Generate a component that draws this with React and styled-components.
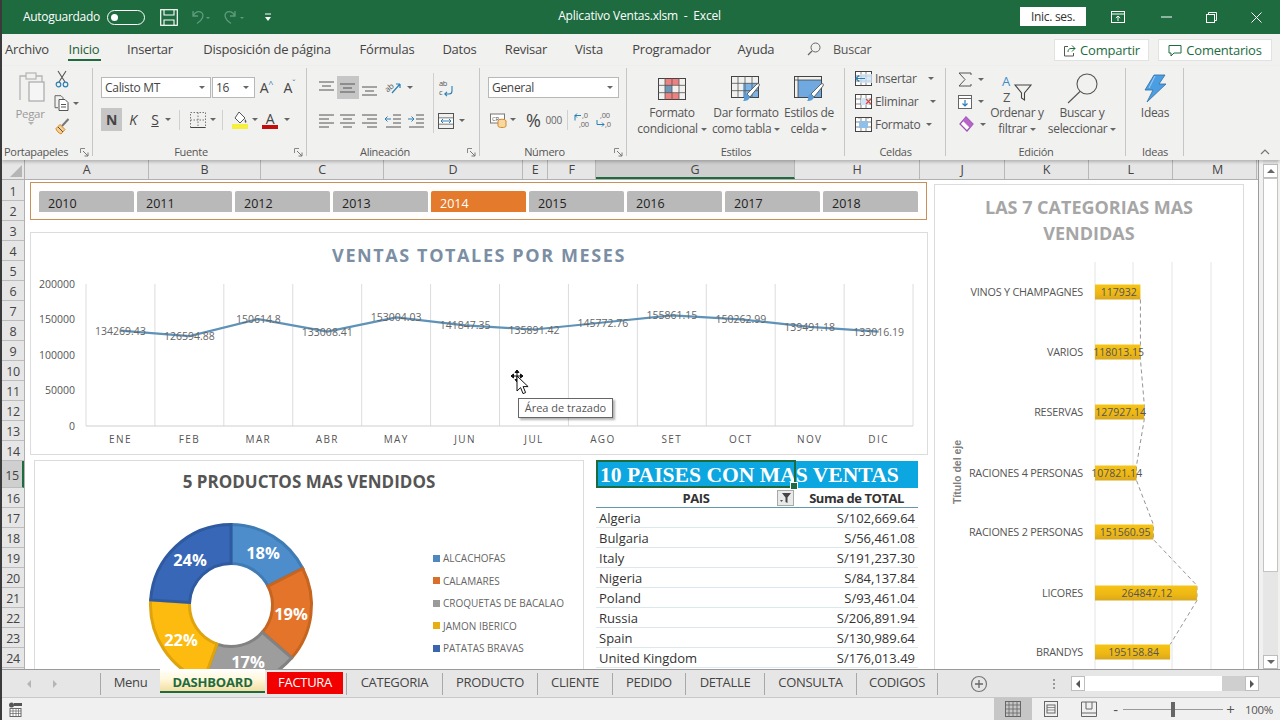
import React from "react";
import styled, { createGlobalStyle, css } from "styled-components";

const Global = createGlobalStyle`
  html, body { margin: 0; padding: 0; background: #fff; overflow: hidden; }
  * { box-sizing: border-box; }
  body { font-family: "Open Sans", "Noto Sans", sans-serif; }
`;

const UI = `"Open Sans", "Noto Sans", sans-serif`;

/* ---------- frame ---------- */
const Window = styled.div`
  width: 1280px; height: 720px; display: flex; flex-direction: column; overflow: hidden;
  border-left: 2px solid #3a3a3a; font-family: ${UI}; color: #444; background: #f1f1ef; letter-spacing: -0.3px;
`;

/* ---------- title bar ---------- */
const TitleBar = styled.header`
  height: 34px; flex: none; background: #1d6b3f; color: #fff; display: flex; align-items: center; font-size: 12px;
`;
const TitleSide = styled.div`
  flex: 1 1 0; display: flex; align-items: center; justify-content: ${p => (p.$end ? "flex-end" : "flex-start")};
  padding-left: 21px;
`;
const DocTitle = styled.div`font-size: 12px; white-space: pre; letter-spacing: -0.2px; padding-bottom: 3px; margin-right: 3px;`;
const AutoLabel = styled.span`white-space: nowrap; padding-bottom: 2px;`;
const Toggle = styled.span`
  width: 38px; height: 15px; border: 1.3px solid #fff; border-radius: 8px; margin-left: 7px; display: flex; align-items: center; padding-left: 3px;
  &::before { content: ""; width: 7px; height: 7px; border-radius: 50%; background: #fff; }
`;
const QuickIcon = styled.span`display: flex; margin-left: ${p => p.$ml}px;`;
const SignIn = styled.button`
  width: 66px; height: 19px; border: 0; background: #fff; color: #333; font: 12px ${UI}; letter-spacing: -0.3px; padding: 0; margin-right: 8px; margin-bottom: 2px;
`;
const WinButton = styled.span`width: ${p => p.$w}px; display: flex; justify-content: center;`;

/* ---------- tab row ---------- */
const TabRow = styled.nav`height: 32px; flex: none; display: flex; align-items: center; font-size: 13px; padding-bottom: 2px; letter-spacing: -0.22px;`;
const Tab = styled.span`
  width: ${p => p.$w}px; flex: none; text-align: center; white-space: nowrap; color: ${p => (p.$active ? "#1d5f39" : "#444")};
`;
const TabText = styled.span`
  position: relative; display: inline-block;
  ${p => p.$active && css`
    &::after { content: ""; position: absolute; left: -1px; right: -2px; bottom: -3px; height: 2.5px; background: #1d6b3f; }
  `}
`;
const SearchBox = styled.span`display: flex; align-items: center; gap: 12px; margin-left: 17px; color: #555; font-size: 12.5px;`;
const TabSpacer = styled.span`flex: 1;`;
const ShareButton = styled.span`
  width: ${p => p.$w}px; height: 22px; margin-right: ${p => p.$mr}px; background: #fff; border: 1px solid #e2e2e2; display: flex; align-items: center; justify-content: center; gap: 4px; color: #1d6b3f; font-size: 13px; white-space: nowrap; font-weight: 500; margin-top: 2px;
`;

/* ---------- ribbon ---------- */
const Ribbon = styled.section`
  height: 94px; flex: none; display: flex; position: relative; z-index: 2; box-shadow: 0 2px 3px rgba(0,0,0,.22); background: #f1f1ef;
`;
const Group = styled.div`
  width: ${p => p.$w}px; flex: none; height: 94px; position: relative; display: flex; flex-direction: column;
  &::after { content: ""; position: absolute; right: 0; top: 2px; height: 88px; width: 1px; background: #c6c6c6; }
`;
const GroupBody = styled.div`
  height: 78px; display: flex; flex-direction: ${p => p.$col ? "column" : "row"}; padding: ${p => p.$pad || "0"};
`;
const GroupLabel = styled.div`
  height: 16px; line-height: 16px; font-size: 11px; color: #555; text-align: ${p => p.$left ? "left" : "center"}; padding-left: ${p => p.$left ? 2 : 0}px; white-space: nowrap; position: relative; padding-right: ${p => p.$pr || 0}px;
`;
const Launcher = styled.span`position: absolute; right: ${p => p.$r ?? 4}px; top: 4px; display: flex;`;
const Collapse = styled.span`position: absolute; right: 10px; bottom: 5px; display: flex;`;
const Row = styled.div`display: flex; align-items: center; height: ${p => p.$h}px; margin-top: ${p => p.$mt || 0}px;`;
const Tool = styled.span`
  width: ${p => p.$w}px; height: 100%; flex: none; display: flex; align-items: center; justify-content: center; background: ${p => p.$on ? "#c6c6c6" : "transparent"};
`;
const ToolSep = styled.span`width: 1px; height: ${p => p.$h || 20}px; background: #d0d0d0; margin: 0 ${p => p.$m ?? 4}px; flex: none;`;
const Caret = styled.span`
  width: 0; height: 0; border-left: 3px solid transparent; border-right: 3px solid transparent; border-top: 3px solid ${p => p.$light ? "#b5b5b5" : "#666"}; display: inline-block; flex: none; margin-left: ${p => p.$ml || 0}px; vertical-align: middle;
`;
const PasteCol = styled.div`width: 40px; margin-left: 9px; padding-top: 5px; display: flex; flex-direction: column; align-items: center; color: #9a9a9a; font-size: 11.5px; flex: none;`;
const PasteText = styled.span`margin-top: 2px; line-height: 17px; margin-right: 2px;`;
const ClipCol = styled.div`width: 30px; margin-left: 0; display: flex; flex-direction: column; padding-top: 3px; flex: none;`;
const Combo = styled.span`
  width: ${p => p.$w}px; height: 21px; background: #fff; border: 1px solid #b8b8b8; margin-left: ${p => p.$ml || 0}px; display: flex; align-items: center; justify-content: space-between; padding: 0 5px 0 3px; font-size: 12px; color: #444; flex: none; white-space: nowrap;
`;
const StyleGlyph = styled.span`
  font-family: ${UI}; font-size: 14px; color: #444;
  font-weight: ${p => p.$b ? 700 : 400}; font-style: ${p => p.$i ? "italic" : "normal"}; text-decoration: ${p => p.$u ? "underline" : "none"};
`;
const GrowGlyph = styled.span`font-size: 14px; color: #444; flex: none; display: flex; width: ${p => p.$w}px; justify-content: center; align-items: flex-start;`;
const Tiny = styled.span`font-size: 9px; line-height: 9px; color: #1f7eb5; margin-top: 1px;`;
const VDivider = styled.span`width: 1px; height: 60px; background: #d0d0d0; margin-top: 7px; flex: none;`;
const AlignCol = styled.div`display: flex; flex-direction: column; padding-top: 10px; flex: none; width: ${p => p.$w}px;`;
const Percent = styled.span`font-size: 18px; color: #444; flex: none;`;
const Thousand = styled.span`font-size: 10px; color: #666; flex: none;`;
const BigButton = styled.div`
  width: ${p => p.$w}px; flex: none; display: flex; flex-direction: column; align-items: center; padding-top: 6px; font-size: 12px; line-height: 16px; color: #555; white-space: nowrap;
`;
const BigIcon = styled.span`height: 33px; display: flex; align-items: center; justify-content: center;`;
const CellRow = styled.div`display: flex; align-items: center; gap: 3px; height: 23px; font-size: 12px; color: #555; padding-left: 10px; white-space: nowrap;`;
const EditCol = styled.div`width: 44px; flex: none; display: flex; flex-direction: column; padding: 2px 0 0 12px;`;
const EditRow = styled.div`height: 22.5px; display: flex; align-items: center; gap: 6px;`;

/* ---------- grid ---------- */
const Main = styled.main`flex: none; height: 509px; display: flex; background: #f1f1ef;`;
const Sheet = styled.div`width: 1257px; flex: none; display: flex; flex-direction: column; border-right: 1px solid #9c9c9c; background: #fff;`;
const ColumnBar = styled.div`height: 20px; flex: none; display: flex; background: #e6e6e6; border-bottom: 1px solid #b0b0b0;`;
const Corner = styled.div`width: 23px; flex: none; border-right: 1px solid #b0b0b0; display: flex; align-items: flex-end; justify-content: flex-end; padding: 0 2px 2px 0;`;
const ColCell = styled.div`
  width: ${p => p.$w}px; flex: none; text-align: center; font-size: 12.5px; line-height: 19px; color: #444; border-right: 1px solid #b8b8b8; padding-left: ${p => p.$pl || 0}px;
  background: ${p => p.$on ? "#cfcfcf" : "transparent"};
  border-bottom: ${p => p.$on ? "2px solid #1d6b3f" : "0"};
`;
const Body = styled.div`flex: 1; display: flex; min-height: 0;`;
const RowBar = styled.div`width: 23px; flex: none; background: #e6e6e6; border-right: 1px solid #b0b0b0; padding-top: 1px; overflow: hidden;`;
const RowCell = styled.div`
  height: ${p => p.$h}px; text-align: center; font-size: 12.5px; line-height: ${p => p.$h}px; color: #444; border-bottom: 1px solid #bdbdbd; padding-top: 1px;
  background: ${p => p.$on ? "#cfcfcf" : "transparent"};
  border-right: ${p => p.$on ? "2px solid #1d6b3f" : "0"};
`;
const Canvas = styled.div`
  flex: 1; overflow: hidden; background: #fff; display: flex; padding: 2px 0 0 5px; align-items: flex-start; letter-spacing: 0;
`;
const LeftPane = styled.div`width: 898px; flex: none; display: flex; flex-direction: column;`;
const Slicer = styled.div`
  height: 38px; width: 897px; border: 1px solid #c89058; display: flex; gap: 3px; padding: 8px 0 0 8px; background: #fffefc;
`;
const SlicerItem = styled.div`
  width: 95px; height: 21px; flex: none; border-radius: 2px 2px 0 0; font-size: 12.5px; padding: 4px 0 0 9px; line-height: 18px;
  background: ${p => p.$on ? "#e47a2b" : "#b9b9b9"}; color: ${p => p.$on ? "#fff" : "#222"};
`;
const ChartCard = styled.div`
  border: 1px solid #dcdcdc; background: #fff; position: relative; flex: none;
  width: ${p => p.$w}px; height: ${p => p.$h}px; margin: ${p => p.$m || 0};
`;
const ChartTitle = styled.div`
  text-align: center; font-weight: 700; font-size: ${p => p.$s}px; line-height: ${p => p.$lh}px; color: ${p => p.$c}; letter-spacing: ${p => p.$ls || 0}px; padding-top: ${p => p.$pt}px; white-space: nowrap;
`;
const PlotSvg = styled.svg`display: block;`;
const PlotGap = styled.div`height: 4px;`;
const Cursor = styled.svg`position: absolute; left: 477px; top: 136px;`;
const Tip = styled.div`
  position: absolute; left: 487px; top: 165px; width: 95px; height: 20px; border: 1px solid #666; background: #fff; font-size: 11px; line-height: 18px; color: #555; text-align: center; box-shadow: 2px 2px 2px rgba(0,0,0,.3); white-space: nowrap;
`;
const BottomRow = styled.div`display: flex; margin-top: 5px; align-items: flex-start;`;
const DonutBody = styled.div`display: flex;`;
const Legend = styled.div`display: flex; flex-direction: column; margin: 53px 0 0 0;`;
const LegendItem = styled.div`height: 22.5px; display: flex; align-items: center; gap: 3px; font-size: 10px; color: #666; white-space: nowrap;`;
const Swatch = styled.span`width: 7px; height: 7px; background: ${p => p.$c}; flex: none;`;

const PivotBlock = styled.div`width: 322px; margin-left: 12px; position: relative; flex: none; padding-top: 1px;`;
const PivotTitle = styled.div`
  height: 27px; background: #0ca6e0; color: #fff; font-family: "Liberation Serif", serif; font-weight: 700; font-size: 21.6px; line-height: 28px; padding-left: 4px; white-space: nowrap;
`;
const Selection = styled.div`
  position: absolute; left: 0; top: 0; width: 200px; height: 28px; border: 2px solid #1d6b3f;
  &::after { content: ""; position: absolute; right: -4px; bottom: -4px; width: 6px; height: 6px; background: #1d6b3f; border: 1px solid #fff; }
`;
const PivotRow = styled.div`
  height: 20px; display: grid; grid-template-columns: 200px 1fr; font-size: 13px; line-height: 20px; color: #333; border-bottom: 1px solid #dbe9ee;
`;
const PivotHead = styled(PivotRow)`font-weight: 700; border-bottom: 1px solid #5f9aa6; color: #333; letter-spacing: -0.45px;`;
const HeadCell = styled.div`text-align: ${p => p.$a || "center"}; padding-right: ${p => p.$pr || 0}px; position: relative; white-space: nowrap;`;
const FilterBtn = styled.span`
  position: absolute; right: 2px; top: 2px; width: 17px; height: 16px; border: 1px solid #a9a9a9; background: #e9e9e9; display: flex; align-items: center; justify-content: center;
`;
const NameCell = styled.div`padding-left: 3px; white-space: nowrap;`;
const AmountCell = styled.div`text-align: right; padding-right: 3px; white-space: nowrap;`;

/* ---------- v-scroll ---------- */
const VScroll = styled.aside`width: 15px; margin-left: 4px; flex: none; display: flex; flex-direction: column; background: #e6e6e6; padding-top: 4px;`;
const ScrollBtn = styled.span`height: 14px; flex: none; background: #fff; border: 1px solid #bdbdbd; display: flex; align-items: center; justify-content: center;`;
const ScrollThumb = styled.span`height: 394px; flex: none; background: #fff; border: 1px solid #c4c4c4;`;
const ScrollTrack = styled.span`flex: 1;`;
const Tri = styled.span`
  width: 0; height: 0; border-left: 4px solid transparent; border-right: 4px solid transparent;
  ${p => p.$up ? "border-bottom: 4px solid #666;" : "border-top: 4px solid #666;"}
`;

/* ---------- sheet tabs ---------- */
const SheetTabs = styled.div`height: 28px; flex: none; display: flex; align-items: stretch; background: #e6e6e6; border-top: 1px solid #9a9a9a; position: relative; z-index: 1; font-size: 13px;`;
const TabNav = styled.div`width: 98px; flex: none; display: flex; align-items: center; color: #aaa; padding-left: 25px; gap: 22px;`;
const NavArrow = styled.span`
  width: 0; height: 0; border-top: 4px solid transparent; border-bottom: 4px solid transparent;
  ${p => p.$l ? `border-right: 4px solid ${p.$dark ? "#555" : "#b5b5b5"};` : `border-left: 4px solid ${p.$dark ? "#555" : "#b5b5b5"};`}
`;
const SheetTab = styled.div`
  width: ${p => p.$w}px; flex: none; height: 22px; margin-top: 3px; text-align: center; line-height: 19px; color: #444; white-space: nowrap; border-left: 1px solid #a8a8a8;
`;
const ActiveTab = styled.div`
  width: 105px; flex: none; height: 24px; margin-top: -1px; text-align: center; line-height: 26px; font-weight: 700; color: #1d6b3f; background: linear-gradient(#fff 0%, #fff8dc 45%, #f3dfa2 100%); border-bottom: 2.5px solid #1d6b3f; white-space: nowrap; letter-spacing: -0.2px;
`;
const RedTabWrap = styled.div`width: 81px; flex: none; padding: 2px 3px 0 2px;`;
const RedTab = styled.div`height: 22px; background: #f20000; color: #fff; text-align: center; line-height: 21px; white-space: nowrap;`;
const AddSheet = styled.span`margin-left: 32px; margin-top: 5px; width: 18px; height: 18px; display: flex; flex: none;`;
const Dots = styled.span`margin-left: 65px; margin-top: 8px; width: 2px; height: 12px; flex: none; background-image: radial-gradient(circle, #999 0.9px, transparent 1.1px); background-size: 2px 4px;`;
const HScroll = styled.div`margin-left: 16px; width: 188px; height: 15px; margin-top: 6px; flex: none; display: flex; background: #cfcfcf;`;
const HBtn = styled.span`width: 14px; flex: none; background: #fff; border: 1px solid #bdbdbd; display: flex; align-items: center; justify-content: center;`;
const HThumb = styled.span`width: 137px; flex: none; background: #fff;`;
const HGap = styled.span`flex: 1;`;

/* ---------- status bar ---------- */
const StatusBar = styled.footer`height: 23px; flex: none; display: flex; align-items: stretch; background: #f0f0f0; border-top: 1px solid #c8c8c8; padding-left: 6px; font-size: 12px; color: #555;`;
const StatusIcon = styled.span`display: flex; align-items: center;`;
const StatusRight = styled.div`margin-left: auto; display: flex; align-items: stretch;`;
const ViewBtn = styled.span`width: 38px; display: flex; align-items: center; justify-content: center; background: ${p => p.$on ? "#c6c6c6" : "transparent"};`;
const Zoomer = styled.div`width: 172px; display: flex; align-items: center; color: #555; font-size: 15px;`;
const ZoomGlyph = styled.span`width: 15px; flex: none; text-align: center;`;
const ZoomTrack = styled.span`width: 100px; height: 1px; background: #999; position: relative; flex: none;
  &::after { content: ""; position: absolute; left: 48px; top: -7px; width: 4px; height: 15px; background: #666; }
`;
const ZoomPct = styled.span`font-size: 11.5px; width: 35px; margin-left: 7px; white-space: nowrap;`;

/* ---------- icons ---------- */
const I = ({ w, h, children, ...r }) => <svg width={w} height={h} viewBox={`0 0 ${w} ${h}`} fill="none" overflow="visible" {...r}>{children}</svg>;

const SaveIcon = () => <I w={18} h={17}><rect x=".7" y=".7" width="16.6" height="15.6" stroke="#fff" strokeWidth="1.2"/><path d="M4 1v5h10V1M4 16v-5h10v5" stroke="#fff" strokeWidth="1.1"/></I>;
const UndoIcon = ({ flip }) => <I w={22} h={17}><g transform={flip ? "translate(14 0) scale(-1 1)" : ""}><path d="M3 2v5h5M3.2 6.8C5 3 9 1.5 11.5 3.5c3 2.4 1 8-4.5 11" stroke="#5e9c7b" strokeWidth="1.3"/></g><path d="M16 8l2 2 2-2" fill="#5e9c7b"/></I>;
const QuickCaret = () => <I w={8} h={9}><path d="M1 1h6" stroke="#fff"/><path d="M1 4l3 4 3-4z" fill="#fff"/></I>;
const RibbonDisplay = () => <I w={14} h={12}><rect x=".5" y=".5" width="13" height="11" stroke="#fff"/><path d="M.5 3h13M7 10V5M4.8 7L7 5l2.2 2" stroke="#fff"/></I>;
const MinIcon = () => <I w={11} h={2}><path d="M0 1h11" stroke="#fff"/></I>;
const RestoreIcon = () => <I w={11} h={11}><rect x=".5" y="2.5" width="8" height="8" stroke="#fff"/><path d="M2.5 2.5v-2h8v8h-2" stroke="#fff"/></I>;
const CloseIcon = () => <I w={11} h={11}><path d="M.5.5l10 10M10.5.5l-10 10" stroke="#fff"/></I>;
const SearchIcon = ({ s = 14 }) => <svg width={s} height={s} viewBox="0 0 14 14" fill="none"><circle cx="8.5" cy="5.5" r="4.5" stroke="#666"/><path d="M5 9l-4 4" stroke="#666" strokeWidth="1.2"/></svg>;
const ShareIcon = () => <I w={13} h={13}><path d="M9 1.5l3 3-3 3M12 4.5H8c-2 0-3 1.3-3 3.5" stroke="#1d6b3f"/><path d="M5 2.5H1.5v9.5h9V9" stroke="#555"/></I>;
const CommentIcon = () => <I w={14} h={13}><path d="M1 1.5h12v7.5H6l-3 3V9H1z" stroke="#1d6b3f"/></I>;

const ClipboardIcon = () => <I w={28} h={32}><path d="M3 29V5h6M19 5h6v6" stroke="#b4b4b4" strokeWidth="1.3"/><rect x="9" y="2" width="10" height="6" stroke="#b4b4b4" strokeWidth="1.2"/><rect x="12" y="11" width="15" height="19" fill="#f5f5f5" stroke="#a8a8a8" strokeWidth="1.2"/></I>;
const ScissorsIcon = () => <I w={14} h={18}><path d="M3 1l7 11M11 1L4 12" stroke="#555" strokeWidth="1.1"/><circle cx="3.5" cy="14.5" r="2.3" stroke="#2a7fb5" strokeWidth="1.2"/><circle cx="10.5" cy="14.5" r="2.3" stroke="#2a7fb5" strokeWidth="1.2"/></I>;
const CopyIcon = () => <I w={17} h={16}><path d="M1 .7h6l2 2v3M1 .7v12h3" stroke="#666"/><path d="M5 4.5h6l3 3v8H5z" fill="#fff" stroke="#555"/><path d="M7 9.5h5M7 12h5" stroke="#555"/></I>;
const BrushIcon = () => <I w={15} h={17}><path d="M13.5 1L7 8" stroke="#777" strokeWidth="2"/><path d="M5 6.5l5 5-4 4.5c-2-1-5-3-5-5.5z" fill="#f6cd90" stroke="#d48a2a"/><path d="M3 9l5 5" stroke="#555"/></I>;

const BorderIcon = () => <I w={16} h={16}><rect x=".5" y=".5" width="15" height="15" stroke="#777" strokeDasharray="1.5 1.5"/><path d="M8 .5v15M.5 8h15" stroke="#777" strokeDasharray="1.5 1.5"/><path d="M.5 15.5h15" stroke="#444"/></I>;
const FillIcon = () => <I w={16} h={18}><path d="M7 1l6 6-5 5-5-5z" stroke="#555" fill="#fff"/><path d="M13 8c1 1.6 2 2.8 1.2 3.6-1 .6-2-.5-1.2-3.6z" fill="#555"/><rect x="0" y="13" width="16" height="5" fill="#f6f03c"/></I>;
const FontColorIcon = () => <I w={16} h={18}><text x="8" y="12.5" textAnchor="middle" fontFamily="Open Sans" fontSize="14" fill="#444">A</text><rect x="0" y="14" width="16" height="4" fill="#c40d0d"/></I>;

const Lines = ({ rows }) => <I w={16} h={16}>{rows.map(([a, b, y], i) => <path key={i} d={`M${a} ${y}H${b}`} stroke="#555"/>)}</I>;
const full = (ys, s = [[0, 15], [3, 12], [0, 15]]) => ys.map((y, i) => [s[i % s.length][0], s[i % s.length][1], y]);
const OrientIcon = () => <I w={18} h={14}><text x="1" y="9" fontSize="8" fontFamily="Open Sans" fill="#555" transform="rotate(-40 6 7)">ab</text><path d="M8 12l8-9M16 3h-4M16 3v4" stroke="#2a7fb5" strokeWidth="1.2"/></I>;
const WrapIcon = () => <I w={16} h={18}><text x="1" y="6.5" fontSize="7.5" fontFamily="Open Sans" fill="#555">ab</text><text x="1" y="15.5" fontSize="7.5" fontFamily="Open Sans" fill="#555">c</text><path d="M14 7v5c0 2-1 3-3 3H7M9 12.8L6.8 15 9 17.2" stroke="#2a7fb5" strokeWidth="1.1"/></I>;
const IndentIcon = ({ out }) => <I w={16} h={14}><path d="M8 1h8M8 5h8M8 9h8M1 13h15" stroke="#555"/>{out
  ? <path d="M6 5H0M2.5 2.5L0 5l2.5 2.5" stroke="#2a7fb5"/>
  : <path d="M0 5h6M3.5 2.5L6 5 3.5 7.5" stroke="#2a7fb5"/>}</I>;
const MergeIcon = () => <I w={16} h={16}><rect x=".5" y=".5" width="15" height="15" stroke="#555"/><path d="M.5 5h15M.5 11h15" stroke="#555"/><rect x="1" y="5.5" width="14" height="5" fill="#fff"/><path d="M3 8h10M5 6L3 8l2 2M11 6l2 2-2 2" stroke="#2a7fb5"/></I>;
const CurrencyIcon = () => <I w={17} h={16}><rect x=".5" y="2" width="14" height="9" fill="#fff" stroke="#777"/><text x="2" y="8.5" fontSize="6" fontFamily="Open Sans" fill="#555">CR</text><ellipse cx="12" cy="9" rx="4" ry="1.8" fill="#f6d8a0" stroke="#d48a2a"/><path d="M8 9v5c0 2 8 2 8 0V9" fill="#f6d8a0" stroke="#d48a2a"/></I>;
const DecimalMore = () => <I w={17} h={18}><text x="8" y="7" fontSize="7.5" fontFamily="Open Sans" fill="#666">,0</text><text x="5" y="16" fontSize="7.5" fontFamily="Open Sans" fill="#666">,00</text><path d="M7 4.5H1M3 2.5l-2 2 2 2M1 4.5v5" stroke="#2a7fb5"/></I>;
const DecimalLess = () => <I w={17} h={18}><text x="5" y="7" fontSize="7.5" fontFamily="Open Sans" fill="#666">,00</text><text x="10" y="16" fontSize="7.5" fontFamily="Open Sans" fill="#666">,0</text><path d="M2 9v4.5h7M7 11.5l2 2-2 2" stroke="#2a7fb5"/></I>;

const Grid = ({ w = 28, h = 22 }) => <>
  <rect x=".5" y=".5" width={w - 1} height={h - 1} stroke="#444"/>
  <path d={`M.5 ${h / 3}H${w}M.5 ${2 * h / 3}H${w}M${w / 4} 0V${h}M${w / 2} 0V${h}M${3 * w / 4} 0V${h}`} stroke="#555" strokeWidth=".8"/>
</>;
const CondIcon = () => <I w={28} h={22}>
  <rect x="7" y="0" width="14" height="7" fill="#ef8080"/><rect x="7" y="7" width="7" height="8" fill="#6f97b7"/><rect x="7" y="15" width="14" height="7" fill="#ef8080"/>
  <Grid/>
</I>;
const Brush = ({ x = 0, y = 0 }) => <g transform={`translate(${x} ${y})`}>
  <path d="M17 1c2-1 3 0 2 2L10 14l-3-3z" fill="#fff" stroke="#444" strokeWidth=".8"/>
  <path d="M7 11l3 3c-1 3-3 4-7 4 1.5-1 1-3 1-4.5 0-1.3 2-2.5 3-2.5z" fill="#5a9bd8"/>
</g>;
const TableIcon = () => <I w={30} h={26}><rect x="12" y="7" width="15" height="14" fill="#7db3e4"/><Grid w={28} h={22}/><Brush x={9} y={7}/></I>;
const CellStyleIcon = () => <I w={30} h={26}><rect x="4" y="4" width="24" height="18" fill="#6fa9df"/><rect x=".5" y=".5" width="27" height="21" stroke="#444"/><path d="M4 0v22M0 4h28" stroke="#444" strokeWidth=".8"/><Brush x={10} y={7}/></I>;
const MiniGrid = ({ children }) => <I w={17} h={15}><rect x=".5" y=".5" width="16" height="14" fill="#fff" stroke="#444"/><path d="M.5 5h16M.5 10h16M6 .5v14M11 .5v14" stroke="#555" strokeWidth=".7"/>{children}</I>;
const InsertCell = () => <MiniGrid><rect x="5" y="3" width="12" height="9" fill="#cfe4f5" opacity=".8"/><path d="M10 7.5H1M4 4.5L1 7.5l3 3" stroke="#2a7fb5" strokeWidth="1.2"/></MiniGrid>;
const DeleteCell = () => <MiniGrid><rect x="6" y="4" width="8" height="7" fill="#cfe4f5"/><path d="M11 5l5 5M16 5l-5 5" stroke="#d9463d" strokeWidth="1.2"/></MiniGrid>;
const FormatCell = () => <MiniGrid><rect x="4" y="4" width="9" height="7" fill="#8fc0ea"/><path d="M4 1.5v-1M13 1.5v-1" stroke="#444"/></MiniGrid>;
const SigmaIcon = () => <I w={14} h={15}><path d="M13 3V1H1l6 6.5L1 14h12v-2" stroke="#555"/></I>;
const FillDown = () => <I w={14} h={14}><rect x=".5" y=".5" width="13" height="13" fill="#fff" stroke="#666"/><path d="M.5 3.5h13" stroke="#666"/><path d="M7 5v6M4.5 8.5L7 11l2.5-2.5" stroke="#2a7fb5" strokeWidth="1.2"/></I>;
const EraserIcon = () => <I w={16} h={16}><path d="M8 1l7 7-6 7-7-7z" fill="#fff" stroke="#9b4fb5" strokeWidth="1.2"/><path d="M8 1l7 7-3.5 3.5-7-7z" fill="#b765c9"/></I>;
const SortIcon = () => <I w={31} h={28}><text x="0" y="11" fontSize="13" fontFamily="Open Sans" fill="#3f8ec9">A</text><text x="1" y="27" fontSize="13" fontFamily="Open Sans" fill="#555">Z</text><path d="M13 10h16l-6.5 8v7l-3-2v-5z" stroke="#444" strokeWidth="1.1"/></I>;
const FindIcon = () => <I w={31} h={31}><circle cx="20" cy="11" r="10" stroke="#555" strokeWidth="1.1"/><path d="M13 18.5L1 30" stroke="#555" strokeWidth="1.1"/></I>;
const BoltIcon = () => <I w={23} h={29}><path d="M10 1h11l-6 9h7L3 28l6-12H1z" fill="#4c9ee3" stroke="#2f6da3" strokeWidth=".8"/><path d="M11 2l-6 12" stroke="#9fd0f5"/></I>;
const LaunchIcon = () => <I w={9} h={9}><path d="M.5 5V.5H5" stroke="#888"/><path d="M3 3l5 5M8 4.5V8H4.5" stroke="#777"/></I>;
const ChevronUp = () => <I w={10} h={6}><path d="M1 5l4-4 4 4" stroke="#777" strokeWidth="1.2"/></I>;
const CornerIcon = () => <I w={12} h={12}><path d="M12 0v12H0z" fill="#b5b5b5"/></I>;
const FilterIcon = () => <I w={13} h={12}><path d="M3 1h9L8.5 5.5V11l-2-1V5.5z" fill="#444"/><path d="M1 8l1.5 2L4 8z" fill="#555"/></I>;
const PlusCircle = () => <I w={18} h={18}><circle cx="9" cy="9" r="7.5" stroke="#777" strokeWidth="1.2"/><path d="M9 5v8M5 9h8" stroke="#666" strokeWidth="1.3"/></I>;
const MacroIcon = () => <I w={15} h={15}><circle cx="3.5" cy="3" r="2.5" fill="#555"/><rect x="6" y="1" width="8" height="3" fill="#555"/><rect x="2" y="6.5" width="11" height="8" stroke="#666" fill="#fff"/><path d="M2 9h11M2 11.5h11M5 6.5v8M8 6.5v8M10.5 6.5v8" stroke="#666" strokeWidth=".7"/></I>;
const NormalView = () => <I w={16} h={16}><rect x=".5" y=".5" width="15" height="15" stroke="#666"/><path d="M.5 4h15M.5 8h15M.5 12h15M4 .5v15M8 .5v15M12 .5v15" stroke="#666" strokeWidth=".8"/></I>;
const PageView = () => <I w={16} h={16}><rect x="1.5" y=".5" width="13" height="15" stroke="#666"/><rect x="4" y="4" width="8" height="8" stroke="#666"/><path d="M4 6.5h8M4 9h8" stroke="#666" strokeWidth=".7"/></I>;
const BreakView = () => <I w={16} h={16}><path d="M.5 12h15M.5 12V1h15v11M.5 12v3.5h15V12M5 1v7h6V1" stroke="#666"/></I>;

/* ---------- data ---------- */
const columns = [["A",124],["B",112],["C",123],["D",139],["E",25],["F",48],["G",199,true],["H",125],["J",85],["K",84],["L",84],["M",84,false,6]];
const rows = Array.from({ length: 24 }, (_, i) => ({ n: i + 1, h: i === 14 ? 27 : 20, on: i === 14 }));
const years = [2010,2011,2012,2013,2014,2015,2016,2017,2018];
const months = ["ENE","FEB","MAR","ABR","MAY","JUN","JUL","AGO","SET","OCT","NOV","DIC"];
const sales = [134269.43,126594.88,150614.8,133008.41,153004.03,141847.35,135891.42,145772.76,155861.15,150262.99,139491.18,133016.19];
const px = i => 120.5 + 68.92 * i;
const py = v => 426 - (v / 200000) * 142;
const countries = [["Algeria","S/102,669.64"],["Bulgaria","S/56,461.08"],["Italy","S/191,237.30"],["Nigeria","S/84,137.84"],["Poland","S/93,461.04"],["Russia","S/206,891.94"],["Spain","S/130,989.64"],["United Kingdom","S/176,013.49"]];
const legend = [["ALCACHOFAS","#4f88bd"],["CALAMARES","#d86f2b"],["CROQUETAS DE BACALAO","#9a9a9a"],["JAMON IBERICO","#e8ad12"],["PATATAS BRAVAS","#3b66ad"]];
const cats = [["VINOS Y CHAMPAGNES",117932,"117932",292],["VARIOS",118013.15,"118013.15",352],["RESERVAS",127927.14,"127927.14",412],["RACIONES 4 PERSONAS",107821.14,"107821.14",473],["RACIONES 2 PERSONAS",151560.95,"151560.95",532],["LICORES",264847.12,"264847.12",593],["BRANDYS",195158.84,"195158.84",652]];

const polar = (cx, cy, r, pct) => {
  const a = (pct / 100) * 2 * Math.PI;
  return [cx + r * Math.sin(a), cy - r * Math.cos(a)];
};
const slice = (a, b) => {
  const cx = 231, cy = 605, R = 80.5, r = 41.5;
  const [x1, y1] = polar(cx, cy, R, a), [x2, y2] = polar(cx, cy, R, b), [x3, y3] = polar(cx, cy, r, b), [x4, y4] = polar(cx, cy, r, a);
  const large = b - a > 50 ? 1 : 0;
  return `M${x1} ${y1}A${R} ${R} 0 ${large} 1 ${x2} ${y2}L${x3} ${y3}A${r} ${r} 0 ${large} 0 ${x4} ${y4}Z`;
};
const slices = [[0,17.5,"#4d8dcb","#3f7cb5"],[17.5,36.4,"#e4742a","#c5651f"],[36.4,55.5,"#9d9d9d","#828282"],[55.5,76,"#fdba0f","#dfa30e"],[76,100,"#3767b6","#2f5aa0"]];
const sliceLabels = [["18%",263,559],["19%",291,620],["17%",248,668],["22%",181,646],["24%",190,566]];

const LineChart = () => (
  <PlotSvg width={896} height={183} viewBox="31 271 896 183">
    {Array.from({ length: 13 }, (_, i) => <line key={i} x1={86 + 68.92 * i} x2={86 + 68.92 * i} y1="284" y2="426" stroke="#dcdcdc"/>)}
    <line x1="86" x2="913" y1="426" y2="426" stroke="#cfcfcf"/>
    {[200000,150000,100000,50000,0].map((v, i) => <text key={v} x="75" y={288 + i * 35.4} textAnchor="end" fontSize="10.5" fontFamily="Open Sans" fill="#555">{v}</text>)}
    <polyline points={sales.map((v, i) => `${px(i)},${py(v)}`).join(" ")} stroke="#5f92b8" strokeWidth="2.2" fill="none" strokeLinejoin="round"/>
    {sales.map((v, i) => <text key={i} x={px(i)} y={py(v) + 4} textAnchor="middle" fontSize="10.5" fontFamily="Open Sans" fill="#666">{v}</text>)}
    {months.map((m, i) => <text key={m} x={px(i)} y="443" textAnchor="middle" fontSize="10" letterSpacing="1.4" fontFamily="Open Sans" fill="#555">{m}</text>)}
  </PlotSvg>
);

const DonutChart = () => (
  <PlotSvg width={398} height={175} viewBox="35 494 398 175">
    {slices.map(([a, b, f, s]) => <path key={a} d={slice(a, b)} fill={f} stroke={s} strokeWidth="3"/>)}
    {sliceLabels.map(([t, x, y]) => <text key={t} x={x} y={y} textAnchor="middle" fontSize="16.5" fontWeight="700" fontFamily="Open Sans" fill="#fff">{t}</text>)}
  </PlotSvg>
);

const BarChart = () => {
  const end = v => 1095 + v * 0.000385;
  const pts = cats.flatMap(([, v, , y]) => [[end(v), y - 7.5], [end(v), y + 7.5]]).slice(1, -1);
  return (
    <PlotSvg width={308} height={430} viewBox="935 246 308 430">
      <defs>
        <linearGradient id="bar" x1="0" y1="0" x2="0" y2="1">
          <stop offset="0" stopColor="#f6c417"/><stop offset=".6" stopColor="#eeb714"/><stop offset="1" stopColor="#d8a71f"/>
        </linearGradient>
      </defs>
      {[1095,1133,1172,1211].map(x => <line key={x} x1={x} x2={x} y1="262" y2="676" stroke="#e4e4e4"/>)}
      <polyline points={pts.map(p => p.join(",")).join(" ")} fill="none" stroke="#888" strokeWidth=".9" strokeDasharray="4 3"/>
      {cats.map(([name, v, label, y]) => (
        <g key={name}>
          <rect x="1095" y={y - 7.5} width={end(v) - 1095} height="15" fill="url(#bar)"/>
          <text x="1083" y={y + 3.5} textAnchor="end" fontSize="10.8" fontFamily="Open Sans" letterSpacing="-.2" fill="#555">{name}</text>
          <text x={(1095 + end(v)) / 2 + 1} y={y + 4} textAnchor="middle" fontSize="10.5" fontFamily="Open Sans" fill="#555">{label}</text>
        </g>
      ))}
      <text transform="translate(961 472) rotate(-90)" textAnchor="middle" fontSize="10.5" fontWeight="700" fontFamily="Liberation Sans" fill="#7f7f7f">Título del eje</text>
    </PlotSvg>
  );
};

export default function App() {
  return (
    <>
      <Global />
      <Window>
        <TitleBar>
          <TitleSide>
            <AutoLabel>Autoguardado</AutoLabel>
            <Toggle />
            <QuickIcon $ml={15}><SaveIcon /></QuickIcon>
            <QuickIcon $ml={12}><UndoIcon /></QuickIcon>
            <QuickIcon $ml={12}><UndoIcon flip /></QuickIcon>
            <QuickIcon $ml={18}><QuickCaret /></QuickIcon>
          </TitleSide>
          <DocTitle>Aplicativo Ventas.xlsm  -  Excel</DocTitle>
          <TitleSide $end>
            <SignIn>Inic. ses.</SignIn>
            <WinButton $w={48}><RibbonDisplay /></WinButton>
            <WinButton $w={48}><MinIcon /></WinButton>
            <WinButton $w={43}><RestoreIcon /></WinButton>
            <WinButton $w={47}><CloseIcon /></WinButton>
          </TitleSide>
        </TitleBar>

        <TabRow>
          {[["Archivo",50],["Inicio",64,true],["Insertar",68],["Disposición de página",166],["Fórmulas",74],["Datos",71],["Revisar",62],["Vista",64],["Programador",101],["Ayuda",68]].map(([t, w, a]) => (
            <Tab key={t} $w={w} $active={a}><TabText $active={a}>{t}</TabText></Tab>
          ))}
          <SearchBox><SearchIcon />Buscar</SearchBox>
          <TabSpacer />
          <ShareButton $w={95} $mr={9}><ShareIcon />Compartir</ShareButton>
          <ShareButton $w={114} $mr={8}><CommentIcon />Comentarios</ShareButton>
        </TabRow>

        <Ribbon>
          <Group $w={91}>
            <GroupBody>
              <PasteCol>
                <ClipboardIcon />
                <PasteText>Pegar</PasteText>
                <Caret $light />
              </PasteCol>
              <ClipCol>
                <Row $h={20}><Tool $w={22}><ScissorsIcon /></Tool></Row>
                <Row $h={22} $mt={3}><Tool $w={22}><CopyIcon /></Tool><Caret /></Row>
                <Row $h={24}><Tool $w={22}><BrushIcon /></Tool></Row>
              </ClipCol>
            </GroupBody>
            <GroupLabel $left>Portapapeles<Launcher><LaunchIcon /></Launcher></GroupLabel>
          </Group>

          <Group $w={214}>
            <GroupBody $col $pad="11px 0 0 8px">
              <Row $h={21}>
                <Combo $w={110}>Calisto MT<Caret /></Combo>
                <Combo $w={43} $ml={1}>16<Caret /></Combo>
                <GrowGlyph $w={23}>A<Tiny>^</Tiny></GrowGlyph>
                <GrowGlyph $w={23}>A<Tiny>ˇ</Tiny></GrowGlyph>
              </Row>
              <Row $h={23} $mt={10}>
                <Tool $w={21} $on><StyleGlyph $b>N</StyleGlyph></Tool>
                <Tool $w={22}><StyleGlyph $i>K</StyleGlyph></Tool>
                <Tool $w={22}><StyleGlyph $u>S</StyleGlyph></Tool>
                <Caret $ml={-1} />
                <ToolSep $m={8} />
                <Tool $w={20}><BorderIcon /></Tool>
                <Caret $ml={2} />
                <ToolSep $m={6} />
                <Tool $w={21}><FillIcon /></Tool>
                <Caret $ml={2} />
                <Tool $w={24}><FontColorIcon /></Tool>
                <Caret $ml={2} />
              </Row>
            </GroupBody>
            <GroupLabel $pr={18}>Fuente<Launcher><LaunchIcon /></Launcher></GroupLabel>
          </Group>

          <Group $w={173}>
            <GroupBody $pad="0 0 0 9px">
              <AlignCol $w={117}>
                <Row $h={23}>
                  <Tool $w={21}><Lines rows={full([2, 6, 10])} /></Tool>
                  <Tool $w={22} $on><Lines rows={full([4, 8, 12])} /></Tool>
                  <Tool $w={22}><Lines rows={full([7, 11, 15])} /></Tool>
                  <Tool $w={24}><OrientIcon /></Tool>
                  <Caret $ml={2} />
                </Row>
                <Row $h={23} $mt={10}>
                  <Tool $w={21}><Lines rows={full([2, 6, 10, 14], [[0, 15], [0, 10]])} /></Tool>
                  <Tool $w={22}><Lines rows={full([2, 6, 10, 14], [[0, 15], [3, 12]])} /></Tool>
                  <Tool $w={22}><Lines rows={full([2, 6, 10, 14], [[0, 15], [5, 15]])} /></Tool>
                  <Tool $w={24}><IndentIcon out /></Tool>
                  <Tool $w={22}><IndentIcon /></Tool>
                </Row>
              </AlignCol>
              <VDivider />
              <AlignCol $w={36}>
                <Row $h={23}><Tool $w={23}><WrapIcon /></Tool></Row>
                <Row $h={23} $mt={10}><Tool $w={23}><MergeIcon /></Tool><Caret $ml={2} /></Row>
              </AlignCol>
            </GroupBody>
            <GroupLabel $pr={17}>Alineación<Launcher><LaunchIcon /></Launcher></GroupLabel>
          </Group>

          <Group $w={147}>
            <GroupBody $col $pad="11px 0 0 8px">
              <Row $h={21}><Combo $w={131}>General<Caret /></Combo></Row>
              <Row $h={23} $mt={10}>
                <Tool $w={21}><CurrencyIcon /></Tool>
                <Caret $ml={1} />
                <Tool $w={10} />
                <Percent>%</Percent>
                <Tool $w={5} />
                <Thousand>000</Thousand>
                <ToolSep $m={5} />
                <Tool $w={20}><DecimalMore /></Tool>
                <Tool $w={21}><DecimalLess /></Tool>
              </Row>
            </GroupBody>
            <GroupLabel $pr={18}>Número<Launcher><LaunchIcon /></Launcher></GroupLabel>
          </Group>

          <Group $w={218}>
            <GroupBody>
              <BigButton $w={90}><BigIcon><CondIcon /></BigIcon>Formato<span>condicional <Caret /></span></BigButton>
              <BigButton $w={58}><BigIcon><TableIcon /></BigIcon>Dar formato<span>como tabla <Caret /></span></BigButton>
              <BigButton $w={68}><BigIcon><CellStyleIcon /></BigIcon>Estilos de<span>celda <Caret /></span></BigButton>
            </GroupBody>
            <GroupLabel>Estilos</GroupLabel>
          </Group>

          <Group $w={101}>
            <GroupBody $col $pad="1px 0 0 0">
              <CellRow><InsertCell />Insertar<Caret $ml={8} /></CellRow>
              <CellRow><DeleteCell />Eliminar<Caret $ml={9} /></CellRow>
              <CellRow><FormatCell />Formato<Caret $ml={2} /></CellRow>
            </GroupBody>
            <GroupLabel>Celdas</GroupLabel>
          </Group>

          <Group $w={180}>
            <GroupBody>
              <EditCol>
                <EditRow><SigmaIcon /><Caret /></EditRow>
                <EditRow><FillDown /><Caret /></EditRow>
                <EditRow><EraserIcon /><Caret /></EditRow>
              </EditCol>
              <BigButton $w={54}><BigIcon><SortIcon /></BigIcon>Ordenar y<span>filtrar <Caret /></span></BigButton>
              <BigButton $w={76}><BigIcon><FindIcon /></BigIcon>Buscar y<span>seleccionar <Caret /></span></BigButton>
            </GroupBody>
            <GroupLabel>Edición</GroupLabel>
          </Group>

          <Group $w={58}>
            <GroupBody><BigButton $w={58}><BigIcon><BoltIcon /></BigIcon>Ideas</BigButton></GroupBody>
            <GroupLabel>Ideas</GroupLabel>
          </Group>
          <Collapse><ChevronUp /></Collapse>
        </Ribbon>

        <Main>
          <Sheet>
            <ColumnBar>
              <Corner><CornerIcon /></Corner>
              {columns.map(([c, w, on, pl]) => <ColCell key={c} $w={w} $on={on} $pl={pl}>{c}</ColCell>)}
            </ColumnBar>
            <Body>
              <RowBar>
                {rows.map(r => <RowCell key={r.n} $h={r.h} $on={r.on}>{r.n}</RowCell>)}
              </RowBar>
              <Canvas>
                <LeftPane>
                  <Slicer>{years.map(y => <SlicerItem key={y} $on={y === 2014}>{y}</SlicerItem>)}</Slicer>
                  <ChartCard $w={898} $h={223} $m="12px 0 0 0">
                    <ChartTitle $s={18} $lh={24} $c="#7b8ea3" $ls={1.6} $pt={10}>VENTAS TOTALES POR MESES</ChartTitle>
                    <PlotGap />
                    <LineChart />
                    <Cursor width="22" height="30" viewBox="0 0 22 30" fill="none">
                      <path d="M9 1v12M3 7h12M9 1L7 3.5h4zM9 13l-2-2.5h4zM3 7l2.5-2v4zM15 7l-2.5-2v4z" stroke="#111" fill="#111"/>
                      <path d="M9 7v15l3.6-3.4 2.4 6 2.6-1-2.5-6h5z" fill="#fff" stroke="#111"/>
                    </Cursor>
                    <Tip>Área de trazado</Tip>
                  </ChartCard>
                  <BottomRow>
                    <ChartCard $w={550} $h={260} $m="0 0 0 4px">
                      <ChartTitle $s={17} $lh={24} $c="#555" $pt={9}>5 PRODUCTOS MAS VENDIDOS</ChartTitle>
                      <DonutBody>
                        <DonutChart />
                        <Legend>{legend.map(([t, c]) => <LegendItem key={t}><Swatch $c={c} />{t}</LegendItem>)}</Legend>
                      </DonutBody>
                    </ChartCard>
                    <PivotBlock>
                      <PivotTitle>10 PAISES CON MAS VENTAS</PivotTitle>
                      <Selection />
                      <PivotHead>
                        <HeadCell>PAIS<FilterBtn><FilterIcon /></FilterBtn></HeadCell>
                        <HeadCell $a="right" $pr={14}>Suma de TOTAL</HeadCell>
                      </PivotHead>
                      {countries.map(([n, a]) => <PivotRow key={n}><NameCell>{n}</NameCell><AmountCell>{a}</AmountCell></PivotRow>)}
                    </PivotBlock>
                  </BottomRow>
                </LeftPane>
                <ChartCard $w={310} $h={500} $m="2px 0 0 6px">
                  <ChartTitle $s={18} $lh={26} $c="#a6a6a6" $pt={9}>LAS 7 CATEGORIAS MAS<br />VENDIDAS</ChartTitle>
                  <BarChart />
                </ChartCard>
              </Canvas>
            </Body>
          </Sheet>
          <VScroll>
            <ScrollBtn><Tri $up /></ScrollBtn>
            <ScrollThumb />
            <ScrollTrack />
            <ScrollBtn><Tri /></ScrollBtn>
          </VScroll>
        </Main>

        <SheetTabs>
          <TabNav><NavArrow $l /><NavArrow /></TabNav>
          <SheetTab $w={60}>Menu</SheetTab>
          <ActiveTab>DASHBOARD</ActiveTab>
          <RedTabWrap><RedTab>FACTURA</RedTab></RedTabWrap>
          <SheetTab $w={96}>CATEGORIA</SheetTab>
          <SheetTab $w={95}>PRODUCTO</SheetTab>
          <SheetTab $w={75}>CLIENTE</SheetTab>
          <SheetTab $w={73}>PEDIDO</SheetTab>
          <SheetTab $w={79}>DETALLE</SheetTab>
          <SheetTab $w={92}>CONSULTA</SheetTab>
          <SheetTab $w={81}>CODIGOS</SheetTab>
          <SheetTab $w={1} />
          <AddSheet><PlusCircle /></AddSheet>
          <Dots />
          <HScroll>
            <HBtn><NavArrow $l $dark /></HBtn>
            <HThumb />
            <HGap />
            <HBtn><NavArrow $dark /></HBtn>
          </HScroll>
        </SheetTabs>

        <StatusBar>
          <StatusIcon><MacroIcon /></StatusIcon>
          <StatusRight>
            <ViewBtn $on><NormalView /></ViewBtn>
            <ViewBtn><PageView /></ViewBtn>
            <ViewBtn><BreakView /></ViewBtn>
            <Zoomer><ZoomGlyph>-</ZoomGlyph><ZoomTrack /><ZoomGlyph>+</ZoomGlyph><ZoomPct>100%</ZoomPct></Zoomer>
          </StatusRight>
        </StatusBar>
      </Window>
    </>
  );
}
